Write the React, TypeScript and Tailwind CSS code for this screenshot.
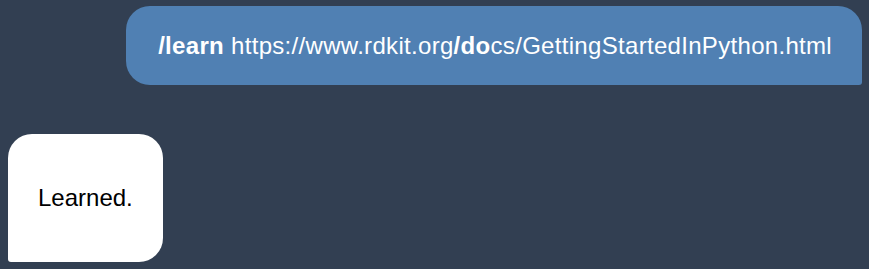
import React from 'react';

const font = { fontFamily: '"Liberation Sans", Arial, Helvetica, sans-serif' };

export default function App() {
  return (
    <div
      className="w-[869px] h-[269px] bg-[#323f52] flex flex-col pt-[6px] pl-[8px] pr-[7px] overflow-hidden"
      style={font}
    >
      {/* Outgoing message */}
      <div className="self-end bg-[#5080b3] text-white text-[24px] leading-[28px] tracking-[0.31px] pt-[26px] pb-[25px] pl-[32px] pr-[30px] rounded-[24px] rounded-br-[3px] whitespace-nowrap">
        <b>/learn</b> https://www.rdkit.org<b>/do</b>cs/GettingStartedInPython.html
      </div>

      {/* Reply */}
      <div className="self-start mt-[49px] bg-white text-black text-[24px] leading-[28px] py-[50px] px-[30px] rounded-[24px] rounded-bl-[3px]">
        Learned.
      </div>
    </div>
  );
}
